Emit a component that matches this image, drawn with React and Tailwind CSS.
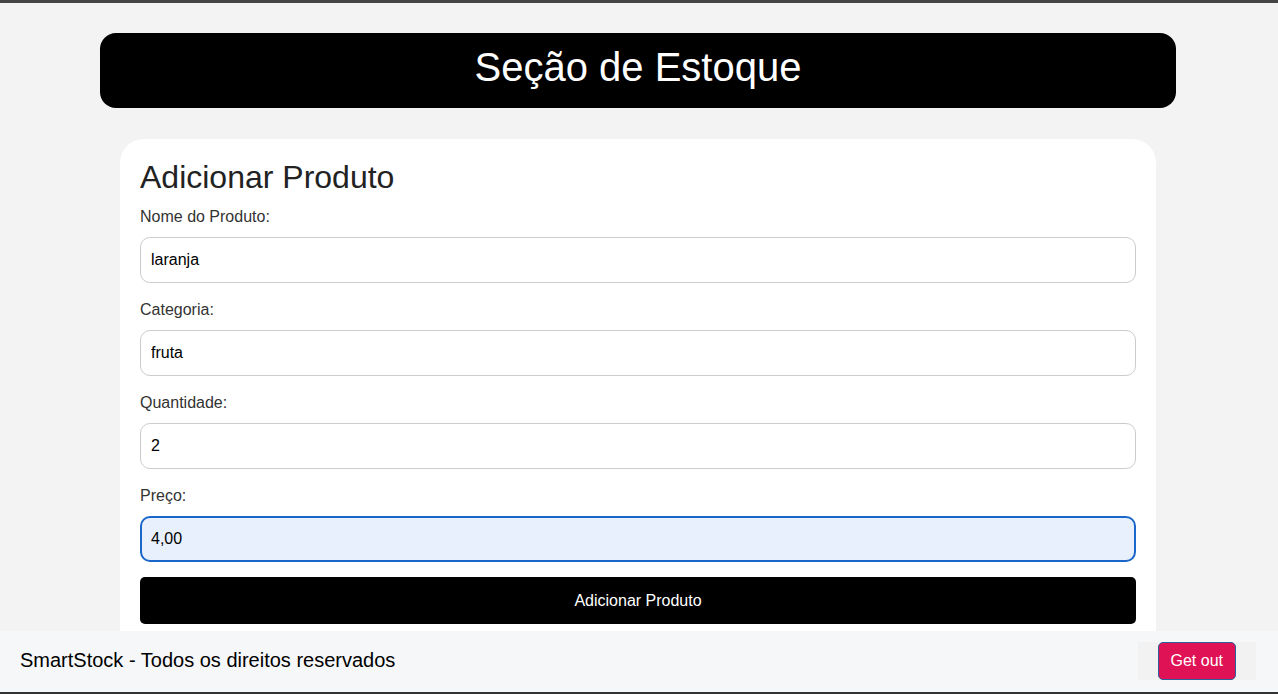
import React, { useState } from 'react';

const fields = [
    { name: 'nome', label: 'Nome do Produto:', value: 'laranja' },
    { name: 'categoria', label: 'Categoria:', value: 'fruta' },
    { name: 'quantidade', label: 'Quantidade:', value: '2' },
    { name: 'preco', label: 'Preço:', value: '4,00', focused: true }
];

const App = () => {
    const [formData, setFormData] = useState(
        Object.fromEntries(fields.map(f => [f.name, f.value]))
    );

    const onChange = e => setFormData({ ...formData, [e.target.name]: e.target.value });

    return (
        <div className="min-h-screen bg-[#f3f3f3] font-['Liberation_Sans',Arial,sans-serif]">
            <div className="h-[3px] bg-[#454545]" />
            <div className="pl-[100px] pr-[102px] pt-[30px]">
                <header className="h-[75px] bg-black rounded-[16px] flex items-center justify-center pb-[7px]">
                    <h1 className="text-white text-[40px] leading-none">Seção de Estoque</h1>
                </header>

                <div className="mx-5 mt-[31px] bg-white rounded-[24px] px-5 pt-5 pb-10">
                    <h2 className="text-[32px] leading-[37px] text-[#222] mb-3">Adicionar Produto</h2>
                    <form onSubmit={e => e.preventDefault()}>
                        {fields.map(f => (
                            <div key={f.name} className="mb-[18px]">
                                <label className="block text-base leading-[18px] text-[#333]">{f.label}</label>
                                <input
                                    type="text"
                                    name={f.name}
                                    value={formData[f.name]}
                                    onChange={onChange}
                                    className={
                                        f.focused
                                            ? 'mt-[11px] block w-full h-[46px] px-[9px] rounded-[10px] border-2 border-[#1a67c9] bg-[#e8f0fe] text-base text-black outline-none'
                                            : 'mt-[11px] block w-full h-[46px] px-[10px] rounded-[10px] border border-[#cccccc] bg-white text-base text-black outline-none'
                                    }
                                />
                            </div>
                        ))}
                        <button type="submit" className="block w-full h-[47px] -mt-[3px] bg-black text-white text-base rounded-[5px]">
                            Adicionar Produto
                        </button>
                    </form>
                </div>
            </div>

            <footer className="fixed bottom-0 left-0 right-0">
                <div className="h-[61px] bg-[#f6f7f9] flex items-center justify-between pl-5 pr-[22px]">
                    <p className="text-[20px] text-black -mt-[3px]">SmartStock - Todos os direitos reservados</p>
                    <div className="bg-[#f2f2f2] px-5 -mt-[2px]">
                        <button className="h-[38px] px-3 bg-[#e01256] text-white text-base rounded-[5px] border border-[#2d5f9c]">
                            Get out
                        </button>
                    </div>
                </div>
                <div className="h-[2px] bg-[#333]" />
            </footer>
        </div>
    );
};

export default App;
